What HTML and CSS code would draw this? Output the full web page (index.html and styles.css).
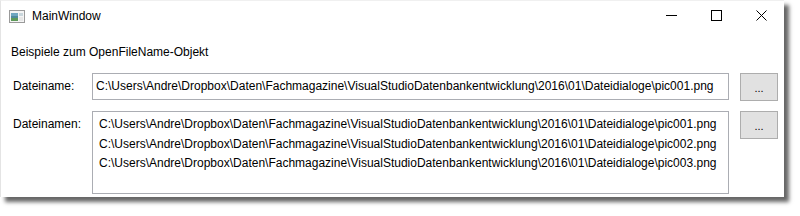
FILE: index.html
```html
<!DOCTYPE html>
<html>
<head>
<meta charset="utf-8">
<link rel="stylesheet" href="styles.css">
</head>
<body>
<div class="window">
  <div class="titlebar">
    <svg class="appicon" width="16" height="13" viewBox="0 0 16 13">
      <rect x="0.5" y="0.5" width="15" height="12" fill="#f4f4f4" stroke="#9a9a9a"/>
      <rect x="2" y="3" width="7" height="8" fill="#4f8a9c"/>
      <rect x="2" y="3" width="7" height="3" fill="#6fa6c0"/>
      <rect x="2" y="8" width="7" height="3" fill="#5e9a5a"/>
      <rect x="10" y="3" width="4" height="3" fill="#c9d6dc"/>
      <rect x="10" y="7" width="4" height="4" fill="#e6e6e6"/>
    </svg>
    <span class="title">MainWindow</span>
    <div class="controls">
      <span class="ctl"><svg width="11" height="11" viewBox="0 0 11 11"><line x1="0" y1="5.5" x2="11" y2="5.5" stroke="#000" stroke-width="1"/></svg></span>
      <span class="ctl"><svg width="11" height="11" viewBox="0 0 11 11"><rect x="0.5" y="0.5" width="10" height="10" fill="none" stroke="#000" stroke-width="1"/></svg></span>
      <span class="ctl"><svg width="11" height="11" viewBox="0 0 11 11"><path d="M0.5 0.5L10.5 10.5M10.5 0.5L0.5 10.5" stroke="#000" stroke-width="1"/></svg></span>
    </div>
  </div>
  <div class="content">
    <div class="heading">Beispiele zum OpenFileName-Objekt</div>
    <div class="row row1">
      <div class="label">Dateiname:</div>
      <div class="textbox single">C:\Users\Andre\Dropbox\Daten\Fachmagazine\VisualStudioDatenbankentwicklung\2016\01\Dateidialoge\pic001.png</div>
      <div class="button">...</div>
    </div>
    <div class="row row2">
      <div class="label">Dateinamen:</div>
      <div class="textbox multi">
        <div class="line">C:\Users\Andre\Dropbox\Daten\Fachmagazine\VisualStudioDatenbankentwicklung\2016\01\Dateidialoge\pic001.png</div>
        <div class="line">C:\Users\Andre\Dropbox\Daten\Fachmagazine\VisualStudioDatenbankentwicklung\2016\01\Dateidialoge\pic002.png</div>
        <div class="line">C:\Users\Andre\Dropbox\Daten\Fachmagazine\VisualStudioDatenbankentwicklung\2016\01\Dateidialoge\pic003.png</div>
      </div>
      <div class="button">...</div>
    </div>
  </div>
</div>
</body>
</html>
```

FILE: styles.css
```css
html, body {
  margin: 0;
  padding: 0;
  background: #ffffff;
}
body {
  font-family: "Liberation Sans", Arial, sans-serif;
  font-size: 12px;
  color: #000;
  width: 800px;
  height: 216px;
  overflow: hidden;
}
.window {
  width: 783px;
  height: 196px;
  background: #fff;
  border-left: 1px solid #e4e4e4;
  border-top: 1px solid #f0f0f0;
  box-shadow: 5px 5px 4px rgba(0,0,0,0.6);
  display: flex;
  flex-direction: column;
}
.titlebar {
  height: 31px;
  display: flex;
  align-items: center;
  padding-left: 8px;
}
.appicon {
  margin-top: -1px;
}
.title {
  margin-left: 7px;
  font-size: 12px;
  margin-top: -1px;
}
.controls {
  margin-left: auto;
  display: flex;
  margin-top: -2px;
}
.ctl {
  width: 45px;
  display: flex;
  justify-content: center;
}
.controls .ctl svg { display: block; }
.content {
  padding: 0 0 0 10px;
}
.heading {
  margin-top: 12px;
  height: 16px;
  line-height: 16px;
}
.row {
  display: flex;
  align-items: flex-start;
}
.row1 { margin-top: 13px; }
.row2 { margin-top: 10px; }
.label {
  width: 79px;
  padding-left: 2px;
}
.row1 .label { margin-top: 6px; }
.row2 .label { margin-top: 6px; }
.textbox {
  border: 1px solid #abadb3;
  white-space: nowrap;
  overflow: hidden;
  box-sizing: border-box;
  width: 637px;
}
.single {
  height: 27px;
  line-height: 25px;
  padding-left: 3px;
}
.multi {
  height: 83px;
  padding: 3px 0 0 6px;
}
.line {
  height: 19.5px;
  line-height: 19.5px;
}
.button {
  margin-left: 11px;
  width: 38px;
  height: 28px;
  box-sizing: border-box;
  background: #e1e1e1;
  border: 1px solid #adadad;
  text-align: center;
  line-height: 28px;
  font-size: 11px;
}
```
